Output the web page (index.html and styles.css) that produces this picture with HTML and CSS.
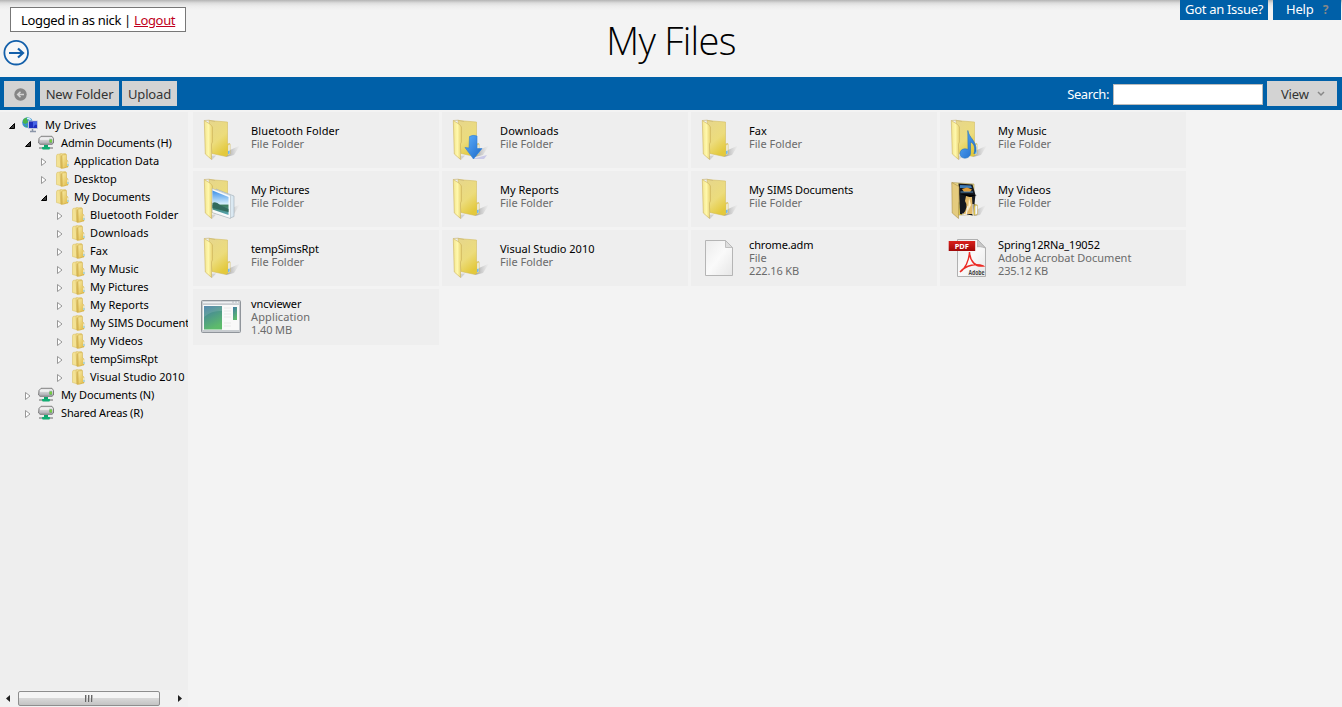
FILE: index.html
```
<!DOCTYPE html>
<html lang="en">
<head>
<meta charset="utf-8">
<title>My Files</title>
<link rel="stylesheet" href="styles.css">
</head>
<body>
<svg class="defs" width="0" height="0" aria-hidden="true">
  <defs>
    <linearGradient id="gFront" x1="0" y1="0" x2="1" y2="0"><stop offset="0" stop-color="#f2e48f"/><stop offset=".5" stop-color="#fff8ac"/><stop offset="1" stop-color="#e6cf6c"/></linearGradient>
    <linearGradient id="gBack" x1="0" y1="0" x2=".5" y2="1"><stop offset="0" stop-color="#e6d68c"/><stop offset=".6" stop-color="#ecdc7c"/><stop offset="1" stop-color="#e3c93c"/></linearGradient>
    <linearGradient id="gSmall" x1="0" y1="0" x2="1" y2="1"><stop offset="0" stop-color="#f8eba6"/><stop offset="1" stop-color="#dfb843"/></linearGradient>
    <linearGradient id="gShade" x1="0" y1="0" x2="1" y2="0"><stop offset="0" stop-color="#888" stop-opacity=".8"/><stop offset="1" stop-color="#bbb" stop-opacity="0"/></linearGradient>
    <linearGradient id="gBlue" x1="0" y1="0" x2="1" y2="1"><stop offset="0" stop-color="#5fb0fb"/><stop offset="1" stop-color="#1c68c9"/></linearGradient>
    <linearGradient id="gPage" x1="0" y1="0" x2="1" y2="1"><stop offset="0" stop-color="#ececec"/><stop offset=".5" stop-color="#fafafa"/><stop offset="1" stop-color="#e6e6e6"/></linearGradient>
    <linearGradient id="gRed" x1="0" y1="0" x2="0" y2="1"><stop offset="0" stop-color="#d9201c"/><stop offset="1" stop-color="#a00808"/></linearGradient>
    <linearGradient id="gApp" x1="0" y1="0" x2=".4" y2="1"><stop offset="0" stop-color="#3f79a5"/><stop offset="1" stop-color="#5dbb6b"/></linearGradient>
    <linearGradient id="gSky" x1="0" y1="0" x2="0" y2="1"><stop offset="0" stop-color="#3c8fe8"/><stop offset=".55" stop-color="#d5effb"/><stop offset=".6" stop-color="#3d7c5c"/><stop offset="1" stop-color="#58a8b8"/></linearGradient>
    <linearGradient id="gDrive" x1="0" y1="0" x2="0" y2="1"><stop offset="0" stop-color="#f4f4f4"/><stop offset="1" stop-color="#a5a5ab"/></linearGradient>
  </defs>
  <symbol id="folder" viewBox="0 0 40 42">
    <path d="M25 38 29 31 39 26.500 33 36Z" fill="url(#gShade)"/>
    <path d="M11 41 7 37 15 36.500Z" fill="#b5b5b5" opacity=".5"/>
    <path d="M8 1.500 26.500 3V25L28.700 24.500V35L25 37.500 11 34.500Z" fill="url(#gBack)" stroke="#cfb654" stroke-width=".5"/>
    <path d="M27 26 29 25V35L27 36Z" fill="#f5f8fb" stroke="#d6c168" stroke-width=".6"/>
    <path d="M27 32 28.700 31.400V34.500L27 35.300Z" fill="#76b8e8"/>
    <path d="M3.300 1.500 9.500 5.500 11.500 8V23L10.500 25V40.500L4.300 35Z" fill="url(#gFront)" stroke="#cdb45c" stroke-width=".6"/>
    <path d="M3.300 1.500 8 1.200 14 2.500" fill="none" stroke="#ccb978" stroke-width=".7"/>
  </symbol>
  <symbol id="folder-down" viewBox="0 0 40 42">
    <use href="#folder"/>
    <path d="M22 40 37 36 34 40Z" fill="#9090dc" opacity=".4"/>
    <path d="M19.500 17.500Q23 15.500 27 17V29.500L32 29.500 23.500 40 15 28.500 19 29Z" fill="url(#gBlue)" stroke="#2f7fd6" stroke-width=".6"/>
  </symbol>
  <symbol id="folder-music" viewBox="0 0 40 42">
    <use href="#folder"/>
    <path d="M19.800 11.500C21 19 29 22 28 32L26 35C28 27 25 24 22.500 23V34C22.500 40.500 12 41 12 34.500C12.500 29 18 29.500 20 30.500Z" fill="url(#gBlue)" stroke="#2574bd" stroke-width=".6"/>
  </symbol>
  <symbol id="folder-pictures" viewBox="0 0 40 42">
    <use href="#folder"/>
    <path d="M15 11 33 18V38.500L29 40 13 35Z" fill="#dbe9f2" stroke="#9eabb5" stroke-width=".6"/>
    <path d="M11.200 10.500 29.500 17.500V40.500L11.200 34.500Z" fill="#f8fafb" stroke="#a5afb5" stroke-width=".5"/>
    <path d="M11.500 12.500 27.500 19V37L11.500 31.500Z" fill="url(#gSky)"/>
    <path d="M11.500 25Q15 23 19 27L27.500 31V34L11.500 30Z" fill="#326b5d"/>
  </symbol>
  <symbol id="folder-videos" viewBox="0 0 40 42">
    <path d="M25 38 30 31 38 27 32 37Z" fill="url(#gShade)"/>
    <path d="M4 4.500 26 6V26L29 27V37L10 37Z" fill="url(#gBack)" stroke="#ab985a" stroke-width=".6"/>
    <path d="M10.500 5.500 24.500 6.500 27.500 17 25 38 12 36Z" fill="#15181f"/>
    <path d="M12 7 23 7.500 24 10 12 10Z" fill="#3f7db8"/>
    <path d="M14 11 19 9.500 24 11.500 22 14 16 14Z" fill="#df9d3a"/>
    <path d="M12.500 14H25" stroke="#5287b5"/>
    <path d="M18 18 24 19 25 36 15 36Q21 29 17 23Z" fill="#e3b969"/>
    <path d="M21 20 23 27 20 33Z" fill="#fff1c9"/>
    <path d="M20 28 18 37M25 26V38M14 36 24 38" stroke="#f5f1e4" stroke-width="1.200"/>
    <path d="M12 16 29 17 22 19Z" fill="#000"/>
    <path d="M3.800 4.500 11 8.500V23L10.500 25V40.500L4.200 35Z" fill="#e4cb7e" stroke="#a98e49" stroke-width=".6"/>
    <path d="M27 28 29.500 27V36L27 37Z" fill="#f5f8fb" stroke="#c9b46b" stroke-width=".6"/>
  </symbol>
  <symbol id="sfolder" viewBox="0 0 16 16">
    <path d="M2 1.500 6.500.7 7 15 1.500 13.500V3Z" fill="#f3e294" stroke="#dcc26a" stroke-width=".6"/>
    <path d="M5 1 10.500.6V14.500L6 15.500Z" fill="url(#gSmall)" stroke="#d6b754" stroke-width=".5"/>
    <path d="M7 2 11.500 1.500V7L13 8V14L7.500 15.200Z" fill="url(#gSmall)" stroke="#d1ac42" stroke-width=".5"/>
    <path d="M6.200 2.500V15" stroke="#c9a646" stroke-width=".9"/>
    <path d="M12.800 8.500V13" stroke="#eef6f6"/><path d="M13 11V13" stroke="#61bce0" stroke-width=".8"/>
  </symbol>
  <symbol id="drive" viewBox="0 0 16 16">
    <path d="M1 3.500 3 1.300H14L15.500 3.500V8L14 9.300H2L.6 8Z" fill="url(#gDrive)" stroke="#737373" stroke-width=".9"/>
    <path d="M2 4H11" stroke="#fff"/>
    <rect x="11.500" y="4.500" width="2.500" height="3" fill="#3ba829"/><path d="M12 6H14" stroke="#b2ef59"/>
    <path d="M1 13H15" stroke="#ababab" stroke-width="2"/>
    <path d="M6 10H10V12H11.500V14.500H4.500V12H6Z" fill="#10a46d"/>
    <path d="M4 13H12" stroke="#10b276" stroke-width="1.500"/>
  </symbol>
  <symbol id="network" viewBox="0 0 16 16">
    <circle cx="5.500" cy="5.500" r="5.300" fill="#3a91cf"/>
    <path d="M1 3Q3 0 6 .5L5 3 6.500 5 3.500 7 1 6ZM2 8 5 9 5 10.500Z" fill="#4bb54b"/>
    <path d="M5 1.500Q7.500 1 8.500 3" stroke="#d8f2ff" stroke-width="1.500" fill="none"/>
    <rect x="6.500" y="4" width="9" height="7.500" fill="#1d2fbd" stroke="#c7ccdc" stroke-width=".9"/>
    <path d="M11 4.500H15V8Q13 6 11 11Z" fill="#4766e6"/>
    <path d="M10.500 12V14M8 14.500H14" stroke="#8a95a8" stroke-width="1.500"/>
  </symbol>
  <symbol id="open" viewBox="0 0 8 8"><path d="M6.500 1.500V6.500H1.500Z" fill="#3b3b3b" stroke="#000"/></symbol>
  <symbol id="closed" viewBox="0 0 8 8"><path d="M1.500.5 6 4 1.500 7.500Z" fill="#fff" stroke="#8c8c8c" stroke-width=".9"/></symbol>
</svg>

<header class="header">
  <div class="account">
    <div class="login">Logged in as nick | <a class="logout">Logout</a></div>
    <svg class="go" viewBox="0 0 27 26"><circle cx="13.200" cy="12.700" r="11.800" fill="#f8f8f8" stroke="#1460aa" stroke-width="1.800"/><path d="M6 13H20M15 8.500 20 13 15 17.500" fill="none" stroke="#1460aa" stroke-width="2.200"/></svg>
  </div>
  <h1 class="title">My Files</h1>
  <nav class="help-links">
    <a class="help-link issue">Got an Issue?</a>
    <a class="help-link help">Help <b class="mark">?</b></a>
  </nav>
</header>

<div class="toolbar">
  <button class="btn back"><svg viewBox="0 0 13 13" width="13" height="13"><circle cx="6.500" cy="6.500" r="6.200" fill="#858585"/><path d="M10 6.500H4M6.500 3.700 3.700 6.500 6.500 9.300" fill="none" stroke="#d3d3d3" stroke-width="1.600"/></svg></button>
  <button class="btn new">New Folder</button>
  <button class="btn upload">Upload</button>
  <label class="search-label" for="q">Search:</label>
  <input class="search" id="q">
  <button class="btn view">View <svg viewBox="0 0 8 6" width="8" height="6"><path d="M1 1 4 4 7 1" fill="none" stroke="#888" stroke-width="1.500"/></svg></button>
</div>

<main class="main">
  <aside class="side">
    <ul class="tree">
      <li class="node l0"><svg class="tw"><use href="#open"/></svg><svg class="ic"><use href="#network"/></svg><span class="name">My Drives</span></li>
      <li class="node l1"><svg class="tw"><use href="#open"/></svg><svg class="ic"><use href="#drive"/></svg><span class="name">Admin Documents (H)</span></li>
      <li class="node l2"><svg class="tw"><use href="#closed"/></svg><svg class="ic"><use href="#sfolder"/></svg><span class="name">Application Data</span></li>
      <li class="node l2"><svg class="tw"><use href="#closed"/></svg><svg class="ic"><use href="#sfolder"/></svg><span class="name">Desktop</span></li>
      <li class="node l2"><svg class="tw"><use href="#open"/></svg><svg class="ic"><use href="#sfolder"/></svg><span class="name tight">My Documents</span></li>
      <li class="node l3"><svg class="tw"><use href="#closed"/></svg><svg class="ic"><use href="#sfolder"/></svg><span class="name wide">Bluetooth Folder</span></li>
      <li class="node l3"><svg class="tw"><use href="#closed"/></svg><svg class="ic"><use href="#sfolder"/></svg><span class="name wide">Downloads</span></li>
      <li class="node l3"><svg class="tw"><use href="#closed"/></svg><svg class="ic"><use href="#sfolder"/></svg><span class="name">Fax</span></li>
      <li class="node l3"><svg class="tw"><use href="#closed"/></svg><svg class="ic"><use href="#sfolder"/></svg><span class="name">My Music</span></li>
      <li class="node l3"><svg class="tw"><use href="#closed"/></svg><svg class="ic"><use href="#sfolder"/></svg><span class="name tight">My Pictures</span></li>
      <li class="node l3"><svg class="tw"><use href="#closed"/></svg><svg class="ic"><use href="#sfolder"/></svg><span class="name">My Reports</span></li>
      <li class="node l3"><svg class="tw"><use href="#closed"/></svg><svg class="ic"><use href="#sfolder"/></svg><span class="name tight">My SIMS Document</span></li>
      <li class="node l3"><svg class="tw"><use href="#closed"/></svg><svg class="ic"><use href="#sfolder"/></svg><span class="name">My Videos</span></li>
      <li class="node l3"><svg class="tw"><use href="#closed"/></svg><svg class="ic"><use href="#sfolder"/></svg><span class="name tight">tempSimsRpt</span></li>
      <li class="node l3"><svg class="tw"><use href="#closed"/></svg><svg class="ic"><use href="#sfolder"/></svg><span class="name">Visual Studio 2010</span></li>
      <li class="node l1"><svg class="tw"><use href="#closed"/></svg><svg class="ic"><use href="#drive"/></svg><span class="name">My Documents (N)</span></li>
      <li class="node l1"><svg class="tw"><use href="#closed"/></svg><svg class="ic"><use href="#drive"/></svg><span class="name">Shared Areas (R)</span></li>
    </ul>
    <div class="hscroll">
      <svg class="arrow" viewBox="0 0 18 17"><path d="M10 5V12L6 8.500Z" fill="#222"/></svg>
      <div class="thumb"><i class="grip"></i><i class="grip"></i><i class="grip"></i></div>
      <svg class="arrow" viewBox="0 0 18 17"><path d="M8 5V12L12 8.500Z" fill="#222"/></svg>
    </div>
  </aside>
  <section class="files">
    <div class="tile"><svg class="big"><use href="#folder"/></svg><div class="info"><span class="fname wide">Bluetooth Folder</span><span>File Folder</span></div></div>
    <div class="tile"><svg class="big"><use href="#folder-down"/></svg><div class="info"><span class="fname wide">Downloads</span><span>File Folder</span></div></div>
    <div class="tile"><svg class="big"><use href="#folder"/></svg><div class="info"><span class="fname">Fax</span><span>File Folder</span></div></div>
    <div class="tile"><svg class="big"><use href="#folder-music"/></svg><div class="info"><span class="fname">My Music</span><span>File Folder</span></div></div>
    <div class="tile"><svg class="big"><use href="#folder-pictures"/></svg><div class="info"><span class="fname tight">My Pictures</span><span>File Folder</span></div></div>
    <div class="tile"><svg class="big"><use href="#folder"/></svg><div class="info"><span class="fname">My Reports</span><span>File Folder</span></div></div>
    <div class="tile"><svg class="big"><use href="#folder"/></svg><div class="info"><span class="fname tight">My SIMS Documents</span><span>File Folder</span></div></div>
    <div class="tile"><svg class="big"><use href="#folder-videos"/></svg><div class="info"><span class="fname">My Videos</span><span>File Folder</span></div></div>
    <div class="tile"><svg class="big"><use href="#folder"/></svg><div class="info"><span class="fname tight">tempSimsRpt</span><span>File Folder</span></div></div>
    <div class="tile"><svg class="big"><use href="#folder"/></svg><div class="info"><span class="fname">Visual Studio 2010</span><span>File Folder</span></div></div>
    <div class="tile">
      <svg class="big" viewBox="0 0 40 42">
        <path d="M6.500 3.500H26.500L33.500 10.500V38.500H6.500Z" fill="url(#gPage)" stroke="#b5b5b5"/>
        <path d="M26.500 3.500V10.500H33.500Z" fill="#dedede" stroke="#b5b5b5" stroke-width=".8"/>
      </svg>
      <div class="info detail"><span class="fname tight">chrome.adm</span><span>File</span><span class="tight">222.16 KB</span></div>
    </div>
    <div class="tile">
      <svg class="big" viewBox="0 0 40 42">
        <path d="M9.500 2.500H29.500L37.500 11V39.500H9.500Z" fill="url(#gPage)" stroke="#b0b0b0"/>
        <path d="M29.500 2.500 37.500 11Q31 9 29.500 10Z" fill="#c9c9c9" stroke="#aaa" stroke-width=".7"/>
        <path d="M12 35C17 32 21 24 21.500 15C22 25 28 30 35 29C29 26 18 28 12 35Z" fill="none" stroke="#ec2b25" stroke-width="1.400"/>
        <rect x=".7" y="4" width="26.500" height="10" fill="url(#gRed)"/>
        <text x="13.800" y="11.800" text-anchor="middle" class="pdf-tag">PDF</text>
        <text x="28.500" y="37.500" text-anchor="middle" class="pdf-brand" textLength="16" lengthAdjust="spacingAndGlyphs">Adobe</text>
      </svg>
      <div class="info detail"><span class="fname tight">Spring12RNa_19052</span><span>Adobe Acrobat Document</span><span class="tight">235.12 KB</span></div>
    </div>
    <div class="tile">
      <svg class="big" viewBox="0 0 40 42">
        <rect x=".5" y="4.500" width="39" height="32" rx="1" fill="#c8ccd0" stroke="#90959b"/>
        <path d="M2 6.500H38" stroke="#eef0f2" stroke-width="1.500"/>
        <path d="M31 6H38" stroke="#b3b8be" stroke-dasharray="2 1"/>
        <rect x="2" y="9" width="36" height="25" fill="#f9f9f9"/>
        <rect x="3" y="10" width="18" height="23.500" fill="url(#gApp)"/>
        <path d="M3 21Q11 14 21 15V10H3Z" fill="#fff" opacity=".12"/>
        <path d="M23 12H30M23 15H30M23 18H30M23 21H30M23 27H30M23 30H30" stroke="#e9e9e9"/>
        <rect x="32" y="11" width="4" height="13" fill="url(#gApp)"/>
      </svg>
      <div class="info detail"><span class="fname tight">vncviewer</span><span class="wide">Application</span><span class="tight">1.40 MB</span></div>
    </div>
  </section>
</main>
</body>
</html>
```

FILE: styles.css
```
* { box-sizing: border-box; }
body {
  margin: 0;
  height: 707px;
  display: flex;
  flex-direction: column;
  overflow: hidden;
  background: #f3f3f3;
  color: #000;
  font-family: "Noto Sans", "Open Sans", sans-serif;
  font-size: 11px;
}
.defs { position: absolute; }
.header {
  height: 77px;
  flex: none;
  display: grid;
  grid-template-columns: 300px 1fr 300px;
  background: linear-gradient(#b4b4b4, #dcdcdc 3px, #ececec 6px, #f3f3f3 10px);
}
.account { padding: 7px 0 0 10px; }
.login {
  width: 176px;
  height: 25px;
  padding-left: 10px;
  border: 1px solid #777;
  background: #fff;
  font-size: 13px;
  line-height: 24px;
  letter-spacing: -0.33px;
  white-space: nowrap;
}
.logout { color: #c00020; text-decoration: underline; }
.go { display: block; width: 27px; height: 26px; margin: 8px 0 0 -7px; }
.title {
  margin: 0;
  padding-top: 13px;
  text-align: center;
  font-family: "Open Sans", "Noto Sans", sans-serif;
  font-weight: 300;
  font-size: 38px;
  line-height: 54px;
  letter-spacing: -0.7px;
}
.help-links { display: flex; justify-content: flex-end; gap: 5px; padding-right: 1px; }
.help-link {
  height: 20px;
  background: #0060a8;
  color: #fff;
  font-size: 13px;
  line-height: 19px;
  white-space: nowrap;
}
.issue { width: 88px; padding-left: 5px; letter-spacing: -0.3px; }
.help { width: 68px; padding-left: 13px; letter-spacing: -0.2px; }
.mark { margin-left: 6px; color: #888; font-size: 12px; }
.toolbar {
  height: 33px;
  flex: none;
  display: flex;
  align-items: flex-start;
  padding: 4px 5px 0 4px;
  background: #0060a8;
  color: #fff;
}
.btn {
  height: 25px;
  padding: 1px 0 0;
  border: 0;
  background: #d3d3d3;
  color: #333;
  font: 13px/24px "Noto Sans", "Open Sans", sans-serif;
  letter-spacing: -0.15px;
  white-space: nowrap;
}
.back { width: 31px; height: 26px; margin-right: 5px; padding: 0 0 0 1px; }
.back svg { display: block; margin: 0 auto; }
.new { width: 79px; margin-right: 3px; }
.upload { width: 55px; }
.search-label { margin-left: auto; font-size: 13px; line-height: 26px; letter-spacing: -0.4px; }
.search { width: 150px; height: 21px; margin: 3px 4px 0; border: 1px solid #bbb; background: #fff; }
.view { width: 70px; padding-left: 2px; }
.view svg { margin: 0 0 2px 5px; }
.main { flex: 1; display: flex; min-height: 0; padding-top: 2px; }
.side { width: 188px; flex: none; display: flex; flex-direction: column; background: #eee; overflow: hidden; }
.tree { flex: 1; margin: 0; padding: 4px 0 0; list-style: none; overflow: hidden; }
.node { display: flex; align-items: center; height: 18px; white-space: nowrap; }
.name { margin-top: -2px; }
.l0 { padding-left: 7px; }
.l1 { padding-left: 23px; letter-spacing: -0.15px; }
.l2 { padding-left: 40px; }
.l3 { padding-left: 56px; }
.wide { letter-spacing: 0.12px; }
.tight { letter-spacing: -0.13px; }
.tw { width: 8px; height: 8px; margin: 1px -1px 0 1px; flex: none; }
.l2 .tw, .l3 .tw { margin: 1px 0 0; }
.ic { width: 16px; height: 16px; margin: 0 7px; flex: none; }
.l2 .ic, .l3 .ic { margin: 0 3px 0 7px; }
.l0 .ic, .l1 .ic { margin-left: 8px; margin-right: 6px; }
.l0 .name, .l1 .name { margin-left: 1px; }
.l0 .ic, .l1 .ic { margin-left: 7px; margin-right: 6px; }
.hscroll { display: flex; align-items: center; justify-content: space-between; height: 17px; background: #f1f1f1; }
.arrow { width: 18px; height: 17px; flex: none; }
.thumb {
  width: 142px;
  height: 15px;
  margin-right: auto;
  display: flex;
  align-items: center;
  justify-content: center;
  gap: 1px;
  border: 1px solid #8e8e8e;
  border-radius: 2px;
  background: linear-gradient(#f5f5f5 45%, #d8d8d8 50%, #c3c3c3);
}
.grip { width: 2px; height: 7px; border-left: 1px solid #666; border-right: 1px solid #bbb; }
.files {
  flex: 1;
  display: grid;
  grid-template-columns: repeat(4, 246px);
  grid-auto-rows: 56px;
  align-content: start;
  gap: 3px;
  padding-left: 5px;
}
.tile { display: flex; align-items: center; padding-left: 8px; background: #eee; }
.big { width: 40px; height: 42px; flex: none; }
.info { display: flex; flex-direction: column; margin: -6px 0 0 10px; color: #6b6b6b; line-height: 13px; white-space: nowrap; }
.detail { margin-top: -2px; }
.fname { color: #000; }
.pdf-tag { font: bold 7.5px "Noto Sans", sans-serif; fill: #fff; }
.pdf-brand { font: bold 7px "Open Sans", sans-serif; fill: #444; }
```
